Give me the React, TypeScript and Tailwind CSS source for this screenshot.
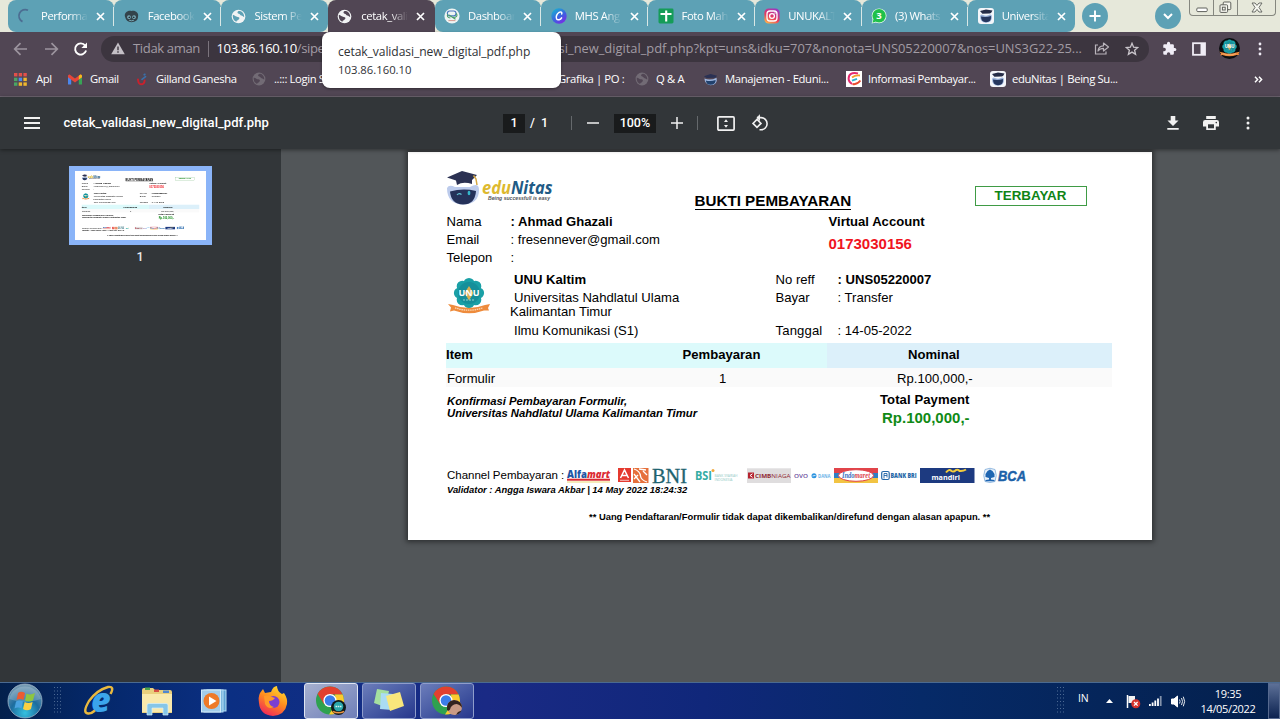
import type { ReactNode } from "react";

/* ---------- favicons and small icons ---------- */

const Globe = ({ fill = "#f1f3f4", bg = "#5da1b5", size = 15 }: { fill?: string; bg?: string; size?: number }) => (
  <svg width={size} height={size} viewBox="0 0 16 16">
    <circle cx="8" cy="8" r="7.3" fill={fill} />
    <path d="M2 6.2 C4 6.6 5 8.4 7.2 8.4 C9 8.6 9.6 9.6 8.4 11 C7.2 12.4 6 12 5.8 13.6 C3 12.8 1.6 9.6 2 6.2Z" fill={bg} />
    <path d="M8 2.2 C6.4 3 6.6 4.6 8.2 5 C9.6 5.2 9.6 6.6 11 7 C12.4 7.2 13 8.2 14 8.6 C14.4 5.8 12.4 2.6 9.4 2Z" fill={bg} />
  </svg>
);

const Spinner = () => (
  <svg width="16" height="16" viewBox="0 0 16 16" fill="none" stroke="#4c6d92" strokeWidth="1.8">
    <path d="M5.5 13.6 A6.2 6.2 0 0 1 11 2.2" />
  </svg>
);

const Face = () => (
  <svg width="15" height="15" viewBox="0 0 16 16">
    <path d="M1 8 C0 4 4 1 8 2 C12 1 16 4 15 8 C15 12 12 14 8 14 C4 14 2 12 1 8Z" fill="#33434b" />
    <circle cx="5.3" cy="8.6" r="2" fill="#7db0bf" />
    <circle cx="10.7" cy="8.6" r="2" fill="#7db0bf" />
    <circle cx="5.6" cy="8.8" r=".9" fill="#222c31" />
    <circle cx="10.4" cy="8.8" r=".9" fill="#222c31" />
    <path d="M5.5 12 Q8 13.2 10.5 12" stroke="#7db0bf" fill="none" />
  </svg>
);

const DashIcon = () => (
  <svg width="16" height="16" viewBox="0 0 16 16" fill="none">
    <circle cx="8" cy="8" r="7.6" fill="#eef4f3" />
    <rect x="3.4" y="3" width="8.6" height="4.8" rx="2.3" stroke="#4d79c0" strokeWidth="1.2" />
    <path d="M5 7 L11.5 11.2 M12 5.5 C14.4 7.4 12 9.8 8.6 9.2 M4 6 C2.4 8 4 10 6.4 10" stroke="#4a9e67" strokeWidth="1.1" />
    <path d="M4.4 12.6 H11.4" stroke="#d89a90" />
  </svg>
);

const CanvaIcon = () => (
  <svg width="16" height="16" viewBox="0 0 16 16" fill="none">
    <defs>
      <linearGradient id="canva" x1="0" y1="0" x2=".7" y2="1">
        <stop offset="0" stopColor="#12bfd0" />
        <stop offset=".6" stopColor="#3b63e0" />
        <stop offset="1" stopColor="#7a2ae8" />
      </linearGradient>
    </defs>
    <circle cx="8" cy="8" r="7.7" fill="url(#canva)" />
    <path d="M10.7 6 C11.5 4.2 9.8 3.4 8.1 4.3 C5.8 5.6 4.6 9 5.6 10.8 C6.6 12.6 9.6 11.6 10.6 9.8" stroke="#fff" strokeWidth="1.5" strokeLinecap="round" />
  </svg>
);

const SheetIcon = () => (
  <svg width="16" height="16" viewBox="0 0 16 16">
    <rect x=".5" y=".5" width="15" height="15" rx="1.4" fill="#159c58" />
    <path d="M8.2 2.5 V13.5 M2.5 6 H13.5" stroke="#fff" strokeWidth="2.1" />
  </svg>
);

const InstaIcon = () => (
  <svg width="16" height="16" viewBox="0 0 16 16" fill="none">
    <defs>
      <linearGradient id="insta" x1=".2" y1="1" x2=".7" y2="0">
        <stop offset="0" stopColor="#fdb44b" />
        <stop offset=".45" stopColor="#e8395e" />
        <stop offset="1" stopColor="#9b36c0" />
      </linearGradient>
    </defs>
    <rect x=".4" y=".4" width="15.2" height="15.2" rx="4.2" fill="url(#insta)" />
    <rect x="3" y="3" width="10" height="10" rx="3" stroke="#fff" strokeWidth="1.3" />
    <circle cx="8" cy="8" r="2.4" stroke="#fff" strokeWidth="1.3" />
    <circle cx="11" cy="5" r=".7" fill="#fff" />
  </svg>
);

const WhatsIcon = () => (
  <svg width="16" height="16" viewBox="0 0 16 16">
    <circle cx="8.1" cy="7.8" r="7.4" fill="#e9fbee" />
    <path d="M.6 15.6 L1.8 11 L5 14.4Z" fill="#e9fbee" />
    <circle cx="8.1" cy="7.8" r="6.7" fill="#1fc04a" />
    <path d="M1.5 14.7 L2.5 11 L5 13.6Z" fill="#1fc04a" />
    <text x="8" y="11.3" textAnchor="middle" fontFamily="Open Sans" fontWeight="700" fontSize="9.5" fill="#fff">3</text>
  </svg>
);

const EduIcon = () => (
  <svg width="16" height="16" viewBox="0 0 16 16">
    <rect width="16" height="16" rx="3" fill="#f4f6fa" />
    <path d="M2 3 L8 1.4 L14.5 2.6 L13 5 L11.5 5.6 L4.4 5.8Z" fill="#252c47" />
    <path d="M2 8 Q3 5.5 5 7 Q9 8.5 12 6.5 Q14 6 14 9 Q14 14.6 8 14.7 Q2 14.6 2 8Z" fill="#9db5dc" />
    <path d="M3 8.5 Q8 9.5 13 8 Q13.5 14.2 8 14.3 Q3 14 3 8.5Z" fill="#26375e" />
  </svg>
);

const ManajemenIcon = () => (
  <svg width="15" height="15" viewBox="0 0 16 16">
    <path d="M1 4.5 L8 2 L15 4 L13 6 L4 6.5Z" fill="#2a3154" />
    <path d="M1.5 7 Q8 9.5 14.5 6 Q16 13.6 8 14 Q2 13.6 1.5 7Z" fill="#9fb7e0" />
    <path d="M3 9 Q8 10.5 13.5 8.5 Q13.5 13.5 8 13.6 Q3.5 13.4 3 9Z" fill="#20406b" />
  </svg>
);

const AppsIcon = () => (
  <svg width="13" height="13" viewBox="0 0 13 13">
    {["#e2504a", "#e2504a", "#e2504a", "#4aa564", "#4d8be8", "#efb72e", "#4aa564", "#efb72e", "#efb72e"].map((c, i) => (
      <rect key={i} x={(i % 3) * 4.7} y={Math.floor(i / 3) * 4.7} width="3.4" height="3.4" fill={c} />
    ))}
  </svg>
);

const GmailIcon = () => (
  <svg width="14" height="11" viewBox="0 0 14 11">
    <path d="M0 1.5 V10 Q0 10.6 .6 10.6 H3.2 V4Z" fill="#4b86ec" />
    <path d="M14 1.5 V10 Q14 10.6 13.4 10.6 H10.8 V4Z" fill="#38a455" />
    <path d="M0 2 Q0 .3 1.6 .5 L7 4.6 L12.4 .5 Q14 .3 14 2 V3.2 L7 8.4 L0 3.2Z" fill="#e5463a" />
    <path d="M10.8 3.2 V1.7 L12.4 .5 Q14 .3 14 2 V3.2 L10.8 5.6Z" fill="#f6bb1d" />
  </svg>
);

const GillandIcon = () => (
  <svg width="12" height="13" viewBox="0 0 12 13" fill="none" strokeLinecap="round">
    <path d="M2 6.5 Q2.4 11.3 5 11.3 Q8.4 11.3 8.6 7.5" stroke="#c8212d" strokeWidth="2" />
    <path d="M6 6.3 L9.5 3.6 M8.2 1.8 L8.9 1.3" stroke="#3b6fa8" strokeWidth="1.7" />
  </svg>
);

const InfoIcon = () => (
  <svg width="16" height="16" viewBox="0 0 16 16" fill="none">
    <rect width="16" height="16" fill="#fff" />
    <path d="M12 2.5 Q2.6 .6 2.6 8 Q2.8 11 6 13" stroke="#e52b6f" strokeWidth="2" />
    <path d="M6 6.5 Q9 4 14 4.5" stroke="#f2a02c" strokeWidth="1.8" />
    <path d="M6.5 13 Q11 14 14.4 9.5" stroke="#e94a2f" strokeWidth="2" />
    <path d="M6 9.6 L11 7.8" stroke="#2bb1cf" strokeWidth="1.8" />
  </svg>
);

const CloseX = () => (
  <svg width="9" height="9" viewBox="0 0 9 9" className="shrink-0">
    <path d="M1 1 L8 8 M8 1 L1 8" stroke="#fff" strokeWidth="1.7" />
  </svg>
);

const Emblem = ({ size = 44, dark = false }: { size?: number; dark?: boolean }) => (
  <svg width={size} height={size} viewBox="0 0 44 44">
    {dark && <circle cx="22" cy="22" r="22" fill="#0b0e10" />}
    {[0, 45, 90, 135, 180, 225, 270, 315].map((a) => (
      <circle key={a} cx="22" cy="8.5" r="5.6" fill="#1aa0a6" transform={`rotate(${a} 22 18)`} />
    ))}
    <circle cx="22" cy="18" r="11" fill="#168f9a" />
    <path d="M22 11 L26.5 18 L22 25.500 L17.500 18Z" fill="#d9ae52" />
    <text x="22" y="21" textAnchor="middle" fontFamily="Open Sans" fontWeight="700" fontSize="9" fill="#fff">UNU</text>
    <path d="M16 25 H28" stroke="#8fd3cf" strokeWidth="1" strokeDasharray="2 1" />
    <path d="M1 29 L6 30 Q22 36 38 30 L43 29 L41 33 L42 35.500 L37 35.500 Q22 41 7 35.500 L3 36.500 L4 32.500Z" fill="#ee8b3c" />
    <path d="M8 32.800 Q22 37.600 36 32.800" stroke="#fbd9b5" strokeWidth="1.300" fill="none" strokeDasharray="1.500 .7" />
  </svg>
);

/* ---------- tab strip ---------- */

const Tab = ({ icon, label, active = false, sep = false, edge = "" }: { icon: ReactNode; label: string; active?: boolean; sep?: boolean; edge?: string }) => (
  <div className={`relative flex h-8 w-[106.75px] shrink-0 items-center pl-[9.500px] ${active ? "rounded-t-lg bg-[#514654]" : "rounded-t-lg bg-[#5da1b5]"} ${edge}`}>
    <div className="flex w-6 shrink-0 items-center">{icon}</div>
    <div className="w-[47px] shrink-0 overflow-hidden text-[11.300px] tracking-[-0.420px] whitespace-nowrap text-white [mask-image:linear-gradient(to_right,black_62%,transparent_100%)]">{label}</div>
    <div className="flex w-[25px] justify-center">
      <CloseX />
    </div>
    {sep && <div className="absolute top-[7px] right-0 h-[19px] w-px bg-[#d9e8e6]" />}
  </div>
);

const TabStrip = () => (
  <div className="flex h-8 bg-[#e6e8da] pl-[7.5px]">
    <Tab icon={<Spinner />} label="Performa" sep edge="rounded-bl-lg" />
    <Tab icon={<Face />} label="Facebook" sep />
    <Tab icon={<Globe />} label="Sistem Pe" edge="rounded-br-lg" />
    <Tab icon={<Globe bg="#514654" />} label="cetak_vali" active />
    <Tab icon={<DashIcon />} label="Dashboar" sep edge="rounded-bl-lg" />
    <Tab icon={<CanvaIcon />} label="MHS Ang" sep />
    <Tab icon={<SheetIcon />} label="Foto Mah" sep />
    <Tab icon={<InstaIcon />} label="UNUKALT" sep />
    <Tab icon={<WhatsIcon />} label="(3) Whats" sep />
    <Tab icon={<EduIcon />} label="Universita" edge="rounded-br-lg" />
    <div className="mt-[3px] ml-[7px] flex size-[26px] items-center justify-center rounded-full bg-[#5da1b5]">
      <svg width="12" height="12" viewBox="0 0 12 12"><path d="M6 .5 V11.5 M.5 6 H11.5" stroke="#fff" strokeWidth="1.9" /></svg>
    </div>
    <div className="mt-[3px] ml-[47px] flex size-[26px] items-center justify-center rounded-full bg-[#5da1b5]">
      <svg width="10" height="7" viewBox="0 0 10 7"><path d="M1 1 L5 5 L9 1" stroke="#fff" strokeWidth="2" fill="none" /></svg>
    </div>
    <div className="ml-[8px] flex h-[16px] w-[87px] rounded-b border border-t-0 border-[#85877f]">
      <div className="flex w-6 items-center justify-center border-r border-[#85877f]">
        <svg width="12" height="12" viewBox="0 0 12 12"><rect x=".8" y="6" width="10.4" height="3.6" rx="1" fill="#fff" stroke="#5e605b" /></svg>
      </div>
      <div className="flex w-6 items-center justify-center border-r border-[#85877f]">
        <svg width="13" height="13" viewBox="0 0 13 13" fill="#f6f7f0" stroke="#5e605b"><rect x="4.2" y="1" width="7.6" height="7.6" rx="1" /><rect x="1" y="3.8" width="7.6" height="7.6" rx="1" /><rect x="3.4" y="6.2" width="2.8" height="2.8" /></svg>
      </div>
      <div className="flex flex-1 items-center justify-center">
        <svg width="12" height="11" viewBox="0 0 12 11"><path d="M1 1 H4 L6 3.4 L8 1 H11 L8 5.4 L11 10 H8 L6 7.4 L4 10 H1 L4 5.4Z" fill="#f6f7f0" stroke="#5e605b" strokeWidth=".9" /></svg>
      </div>
    </div>
  </div>
);

/* ---------- address bar ---------- */

const AddressBar = () => (
  <div className="flex h-[33px] items-center bg-[#514654] pl-3 text-[13.1px] tracking-[-0.38px]">
    <svg width="17" height="16" viewBox="0 0 17 16" fill="none" stroke="#9c949e" strokeWidth="1.7"><path d="M15 8 H3 M8.5 2.2 L2.7 8 L8.5 13.8" /></svg>
    <svg className="ml-[14px]" width="17" height="16" viewBox="0 0 17 16" fill="none" stroke="#9c949e" strokeWidth="1.7"><path d="M2 8 H14 M8.5 2.2 L14.3 8 L8.5 13.8" /></svg>
    <svg className="ml-[12px]" width="17" height="16" viewBox="0 0 17 16" fill="none"><path d="M13.2 4.6 A5.6 5.6 0 1 0 14.1 9.6" stroke="#fff" strokeWidth="1.9" /><path d="M15 1.4 V7 H9.4Z" fill="#fff" /></svg>
    <div className="ml-[12px] flex h-[26px] w-[1048px] items-center rounded-full bg-[#3c353f] pl-[10px] text-[#a29ca4]">
      <svg width="14" height="13" viewBox="0 0 14 13"><path d="M7 .5 L13.8 12.2 H.2Z" fill="#c4c0c6" /><path d="M7 4.5 V8.2 M7 9.3 V10.8" stroke="#3c353f" strokeWidth="1.4" /></svg>
      <span className="ml-2 w-[75px] whitespace-nowrap">Tidak aman</span>
      <span className="h-4 w-px bg-[#7b747d]" />
      <span className="ml-[7.500px] w-[118.500px] overflow-hidden whitespace-nowrap"><span className="text-white">103.86.160.10</span>/sipema/</span>
      <span className="flex w-[747px] justify-end overflow-hidden text-[12.9px] tracking-[-0.010px] whitespace-nowrap">validasi_new_digital_pdf.php?kpt=uns&amp;idku=707&amp;nonota=UNS05220007&amp;nos=UNS3G22-25...</span>
      <svg className="ml-[12px]" width="16" height="15" viewBox="0 0 16 15" fill="none" stroke="#b9b4bb" strokeWidth="1.2"><path d="M4 4 H1.5 V13 H12 V10.5" /><path d="M4 10 Q4.5 5 9.5 4.8 V2 L14.5 6 L9.5 10 V7.3 Q6 7.3 4 10Z" strokeLinejoin="round" /></svg>
      <svg className="ml-[15px]" width="14" height="14" viewBox="0 0 14 14" fill="none" stroke="#c9c5cb" strokeWidth="1.3"><path d="M7 1.3 L8.6 5.2 L12.8 5.5 L9.6 8.2 L10.6 12.4 L7 10.1 L3.4 12.4 L4.4 8.2 L1.2 5.5 L5.4 5.2Z" /></svg>
    </div>
    <svg className="ml-[13px]" width="15" height="15" viewBox="0 0 24 24" fill="#f0edf6"><path d="M20.5 11H19V7a2 2 0 0 0-2-2h-4V3.500a2.500 2.500 0 0 0-5 0V5H4a2 2 0 0 0-2 2v3.800h1.500a2.700 2.700 0 0 1 0 5.400H2V20a2 2 0 0 0 2 2h3.800v-1.500a2.700 2.700 0 0 1 5.400 0V22H17a2 2 0 0 0 2-2v-4h1.500a2.500 2.500 0 0 0 0-5z" /></svg>
    <svg className="ml-[15px]" width="14" height="14" viewBox="0 0 14 14"><rect x="1" y="1.200" width="12" height="11.600" fill="none" stroke="#f0edf6" strokeWidth="1.800" /><rect x="8.500" y="1" width="4.500" height="12" fill="#f0edf6" /></svg>
    <span className="ml-[13px] flex"><Emblem size={21} dark /></span>
    <svg className="ml-[18px]" width="4" height="14" viewBox="0 0 4 14" fill="#f0edf6"><circle cx="2" cy="2" r="1.400" /><circle cx="2" cy="7" r="1.400" /><circle cx="2" cy="12" r="1.400" /></svg>
  </div>
);

const Bookmark = ({ icon, label, w, gap = "w-[22px]" }: { icon: ReactNode; label: string; w: string; gap?: string }) => (
  <div className={`flex shrink-0 items-center ${w}`}>
    <div className={`flex shrink-0 items-center ${gap}`}>{icon}</div>
    <span className="whitespace-nowrap">{label}</span>
  </div>
);

const Bookmarks = () => (
  <div className="flex h-8 items-center border-b border-[#6f6672] bg-[#514654] pb-[3px] pl-[14px] text-[11.3px] tracking-[-0.370px] text-white">
    <Bookmark icon={<AppsIcon />} label="Apl" w="w-[54px]" gap="w-[22px]" />
    <Bookmark icon={<GmailIcon />} label="Gmail" w="w-[68px]" />
    <Bookmark icon={<GillandIcon />} label="Gilland Ganesha" w="w-[116px]" gap="w-[20px]" />
    <Bookmark icon={<Globe fill="#726b75" bg="#514654" size={14} />} label="..::: Login S" w="w-[160px]" />
    <Bookmark icon={null} label="Grafika | PO :" w="w-[223px]" gap="w-[146px]" />
    <Bookmark icon={<Globe fill="#726b75" bg="#514654" size={14} />} label="Q & A" w="w-[68px]" gap="w-[21px]" />
    <Bookmark icon={<ManajemenIcon />} label="Manajemen - Eduni..." w="w-[143px]" />
    <Bookmark icon={<InfoIcon />} label="Informasi Pembayar..." w="w-[144px]" />
    <Bookmark icon={<EduIcon />} label="eduNitas | Being Su..." w="w-[263.500px]" />
    <svg width="9" height="7" viewBox="0 0 9 7" fill="none" stroke="#fff" strokeWidth="1.500"><path d="M1 .8 L3.600 3.500 L1 6.200 M5 .8 L7.600 3.500 L5 6.200" /></svg>
  </div>
);

/* ---------- PDF viewer ---------- */

const PdfToolbar = () => (
  <div className="relative z-10 flex h-[52px] items-center bg-[#323639] pl-6 font-['Roboto',sans-serif] text-[12.500px] font-medium text-white shadow-[0_1px_4px_rgba(0,0,0,0.45)]">
    <svg width="16" height="12" viewBox="0 0 16 12"><path d="M0 1 H16 M0 6 H16 M0 11 H16" stroke="#f1f1f1" strokeWidth="2" /></svg>
    <span className="ml-[23.500px] w-[439.500px] text-[13px] tracking-[0.040px]">cetak_validasi_new_digital_pdf.php</span>
    <span className="flex h-[19px] w-[22px] items-center justify-center bg-[#191b1c]">1</span>
    <span className="ml-[5px]">/</span>
    <span className="ml-[6px] w-[30px]">1</span>
    <span className="h-[14px] w-px bg-[#65696c]" />
    <svg className="ml-[15px]" width="12" height="12" viewBox="0 0 12 12"><path d="M0 6 H12" stroke="#f1f1f1" strokeWidth="1.500" /></svg>
    <span className="ml-[15px] flex h-[19px] w-[42px] items-center justify-center bg-[#191b1c]">100%</span>
    <svg className="ml-[15px]" width="12" height="12" viewBox="0 0 12 12"><path d="M0 6 H12 M6 0 V12" stroke="#f1f1f1" strokeWidth="1.500" /></svg>
    <span className="ml-[14px] h-[14px] w-px bg-[#65696c]" />
    <svg className="ml-[19px]" width="18" height="15" viewBox="0 0 18 15" fill="none"><rect x=".9" y=".9" width="16.200" height="13.200" rx="1" stroke="#f1f1f1" strokeWidth="1.700" /><path d="M9 3.300 L11 6 H7Z M9 11.700 L11 9 H7Z" fill="#f1f1f1" /></svg>
    <svg className="ml-[16px]" width="18" height="18" viewBox="0 0 18 18" fill="none" stroke="#f1f1f1" strokeWidth="1.600"><path d="M6 5.400 L10 9.400 L6 13.400 L2 9.400Z" /><path d="M6 3.600 H10 A6 6 0 0 1 10 15.800 L8.500 15.700" /><path d="M9 .6 L5.800 3.700 L9 6.800" fill="#f1f1f1" strokeWidth=".6" /></svg>
    <div className="ml-auto flex items-center pr-[30px]">
      <svg width="12" height="14" viewBox="0 0 12 14" fill="#f1f1f1"><path d="M3.700 0 H8.300 V4.500 H11.500 L6 10 L.5 4.500 H3.700Z M.3 12 H11.700 V13.700 H.3Z" /></svg>
      <svg className="ml-[24px]" width="16" height="14" viewBox="0 0 16 14"><path d="M3.200 0 H12.800 V3 H3.200Z M2.200 4 H13.800 Q16 4 16 6.300 V10.500 H12.800 V14 H3.200 V10.500 H0 V6.300 Q0 4 2.200 4Z" fill="#f1f1f1" /><path d="M5 8.300 H11 V12.300 H5Z" fill="#323639" /><circle cx="13.300" cy="6.600" r=".8" fill="#323639" /></svg>
      <svg className="ml-[27px]" width="4" height="14" viewBox="0 0 4 14" fill="#f1f1f1"><circle cx="2" cy="2" r="1.500" /><circle cx="2" cy="7" r="1.500" /><circle cx="2" cy="12" r="1.500" /></svg>
    </div>
  </div>
);

const EduLogo = () => (
  <svg width="110" height="38" viewBox="0 0 110 38" className="shrink-0">
    <path d="M1 18 Q3 14 9 17 H24 Q33 12 33 20 Q33 34 17 34.500 Q1 34 1 18Z" fill="#bccbec" />
    <path d="M4 21.500 Q17 18 30 21 Q29 34.500 17 34.500 Q5 34 4 21.500Z" fill="#25325a" />
    <path d="M1 7.500 L16 1 L31 5 L26 10 L26 14 Q17 11 11 15 L10 10.500Z" fill="#2b3152" />
    <path d="M27.500 5.500 L30 9 L31 15" stroke="#d4a743" strokeWidth="1.500" fill="none" />
    <path d="M11 25 Q13 22.500 15.500 24.500" stroke="#62c4d4" fill="none" strokeWidth="1.200" />
    <ellipse cx="23" cy="23" rx="1.400" ry="2.300" fill="#35b7cc" />
    <text x="36" y="24" fontFamily="Open Sans" fontWeight="700" fontStyle="italic" fontSize="17" textLength="70.500" lengthAdjust="spacingAndGlyphs"><tspan fill="#ddb92f">edu</tspan><tspan fill="#205a85">Nitas</tspan></text>
    <text x="42" y="30" fontFamily="Liberation Sans" fontWeight="700" fontStyle="italic" fontSize="5.500" fill="#55565a" textLength="62" lengthAdjust="spacingAndGlyphs">Being successfull is easy</text>
  </svg>
);

const Channels = () => (
  <svg width="462" height="18" viewBox="566 467 462 18" className="shrink-0" fontFamily="Open Sans">
    <text x="567" y="477.500" fontWeight="800" fontSize="10.500" textLength="43" lengthAdjust="spacingAndGlyphs"><tspan fill="#1d56a5">Alfa</tspan><tspan fill="#dc2b34" fontStyle="italic">mart</tspan></text>
    <rect x="567" y="478.700" width="43" height="2" fill="#d92931" />
    <path d="M567 482 H610" stroke="#e9cf55" strokeWidth=".8" />
    <rect x="618" y="468" width="13" height="14" fill="#e5392f" />
    <path d="M620.500 478 L624.500 470 L628.500 478 M622 475.500 H627" stroke="#fff" strokeWidth="1.500" fill="none" />
    <path d="M620 480.300 H629" stroke="#f6c4c0" />
    <rect x="633" y="468" width="15.500" height="15" fill="#e6703b" />
    <path d="M634 469 Q640 471 640.500 476 Q641 480 647 482 M634 479 L638 475 M643 471 L647 475 M634 474 L640 482 M639 469 L646 470" stroke="#fff" strokeWidth="1.300" fill="none" />
    <text x="652" y="483" fontFamily="Liberation Serif" fontSize="21" fill="#1e6370" stroke="#1e6370" strokeWidth=".3" textLength="35" lengthAdjust="spacingAndGlyphs">BNI</text>
    <text x="695" y="480.300" fontWeight="700" fontSize="11.500" fill="#35ada4" textLength="17" lengthAdjust="spacingAndGlyphs">BSI</text>
    <circle cx="713" cy="470.500" r="1.500" fill="#f0a83c" />
    <text x="714.500" y="477" fontSize="3" fill="#8fcac5" textLength="23" lengthAdjust="spacingAndGlyphs">BANK SYARIAH</text>
    <text x="714.500" y="480.800" fontSize="3" fill="#8fcac5" textLength="18" lengthAdjust="spacingAndGlyphs">INDONESIA</text>
    <rect x="747" y="468.300" width="44" height="14.700" fill="#dfddde" />
    <rect x="748" y="472.500" width="6" height="6" fill="#b5232f" />
    <path d="M752.500 473.800 L750 475.500 L752.500 477.300" stroke="#fff" fill="none" />
    <text x="755" y="477.800" fontWeight="700" fontSize="5.800" fill="#8f2a33" textLength="35.500" lengthAdjust="spacingAndGlyphs">CIMB<tspan fontWeight="400">NIAGA</tspan></text>
    <text x="794" y="478" fontWeight="600" fontSize="6" fill="#6a4a9c" textLength="14" lengthAdjust="spacingAndGlyphs">OVO</text>
    <circle cx="814" cy="475.700" r="2.500" fill="#2d94e0" />
    <path d="M812.500 476 L815.500 475.400" stroke="#fff" strokeWidth=".8" />
    <text x="818" y="477.500" fontWeight="700" fontSize="4.800" fill="#69b4e8" textLength="12.500" lengthAdjust="spacingAndGlyphs">DANA</text>
    <rect x="834" y="468" width="44" height="5" fill="#e1444a" />
    <rect x="834" y="473" width="44" height="5.500" fill="#2f7fc3" />
    <rect x="834" y="478" width="44" height="5" fill="#f2c443" />
    <ellipse cx="856" cy="475.500" rx="17.500" ry="5.800" fill="#fff" stroke="#e1444a" strokeWidth="1" />
    <text x="842" y="478" fontFamily="Liberation Serif" fontStyle="italic" fontWeight="700" fontSize="7.500" fill="#3b6fc0" textLength="28" lengthAdjust="spacingAndGlyphs">Indo<tspan fill="#dd4850">maret</tspan></text>
    <rect x="881.700" y="471.500" width="7.500" height="8" rx="1.500" fill="none" stroke="#2468a8" strokeWidth="1.200" />
    <path d="M884 478.500 V473.500 H887 V477.500 M884 475.500 H887" stroke="#2468a8" fill="none" strokeWidth=".9" />
    <text x="890.500" y="478" fontWeight="800" fontSize="6" fill="#2468a8" textLength="26" lengthAdjust="spacingAndGlyphs">BANK BRI</text>
    <rect x="920" y="468" width="54.500" height="15" fill="#1d3a80" />
    <text x="931.500" y="480" fontWeight="700" fontSize="7.800" fill="#fff" textLength="28.500" lengthAdjust="spacingAndGlyphs">mandiri</text>
    <path d="M946 472.500 Q949 468.500 951.500 471 Q953.500 472.500 956 470 Q958.500 469 959.500 471 Q963 471.500 966 469.500" stroke="#f3cb3c" strokeWidth="2" fill="none" />
    <path d="M985 469.500 Q990 467 995 469.500 Q997.500 475.500 995 481.500 Q990 483.500 985 481.500 Q982.500 475.500 985 469.500Z" fill="#e9f1fa" stroke="#80addb" strokeWidth=".8" />
    <path d="M990 469.500 L992.500 471 L994.500 474 L994.500 477 L991 478 V479.500 L994.500 480 V481.300 H985.500 V480 L989 479.500 V478 L985.500 477 L985.500 474 L987.500 471Z" fill="#1f66b2" />
    <text x="998" y="481" fontFamily="Liberation Sans" fontWeight="700" fontStyle="italic" fontSize="15" fill="#1c61a8" stroke="#1c61a8" strokeWidth=".5" textLength="28" lengthAdjust="spacingAndGlyphs">BCA</text>
  </svg>
);

const Receipt = () => (
  <div className="flex h-[388px] w-[744px] shrink-0 flex-col bg-white pl-[38px] font-['Liberation_Sans',Arial,sans-serif] text-[13.100px] text-black">
    <div className="flex h-[61px] pt-[18px]">
      <EduLogo />
      <div className="mt-[22px] ml-[138.500px] w-[280px] text-[15.200px] leading-[18px] font-bold whitespace-nowrap"><span className="border-b-[1.500px] border-black leading-none">BUKTI PEMBAYARAN</span></div>
      <div className="mt-[16px] flex h-[20px] w-[112px] items-center justify-center border border-[#3f9b45] text-[13.400px] font-bold text-[#0f8415]">TERBAYAR</div>
    </div>
    <div className="flex h-[58px] leading-[18px]">
      <div className="w-[64.500px] pl-[0.500px]">
        <div>Nama</div>
        <div>Email</div>
        <div>Telepon</div>
      </div>
      <div className="w-[318px]">
        <div className="font-bold">: Ahmad Ghazali</div>
        <div>: fresennever@gmail.com</div>
        <div>:</div>
      </div>
      <div className="font-bold">
        <div>Virtual Account</div>
        <div className="mt-[4px] text-[15px] text-[#f0141e]">0173030156</div>
      </div>
    </div>
    <div className="flex h-[72px] leading-[18px]">
      <div className="w-[64px] pt-[4px] pl-[1px]"><Emblem size={44} /></div>
      <div className="w-[265.500px]">
        <div className="pl-[4px] font-bold">UNU Kaltim</div>
        <div className="pt-[2px] pl-[4px] leading-[14px]">Universitas Nahdlatul Ulama</div>
        <div className="leading-[14px]">Kalimantan Timur</div>
        <div className="pt-[3px] pl-[4px]">Ilmu Komunikasi (S1)</div>
      </div>
      <div className="w-[62px]">
        <div>No reff</div>
        <div>Bayar</div>
        <div className="pt-[15px] tracking-[0.150px]">Tanggal</div>
      </div>
      <div>
        <div className="font-bold">: UNS05220007</div>
        <div>: Transfer</div>
        <div className="pt-[15px]">: 14-05-2022</div>
      </div>
    </div>
    <div className="flex h-[25px] w-[666px] items-center font-bold">
      <div className="flex h-full w-[381px] items-center bg-[#dcfafb] pb-[2px]">
        <span className="w-[236.500px]">Item</span>
        <span>Pembayaran</span>
      </div>
      <div className="flex h-full flex-1 items-center bg-[#dcf0fa] pb-[2px] pl-[81px]">Nominal</div>
    </div>
    <div className="flex h-[19px] w-[666px] items-center bg-[#fafafa] pt-[2px] pl-[1px]">
      <span className="w-[272px]">Formulir</span>
      <span className="w-[178px]">1</span>
      <span>Rp.100,000,-</span>
    </div>
    <div className="flex h-[80px] pt-[4px] pl-[1px] font-bold">
      <div className="w-[433px] pt-[4px] text-[11.300px] leading-[12px] tracking-[-0.020px] italic">
        <div>Konfirmasi Pembayaran Formulir,</div>
        <div>Universitas Nahdlatul Ulama Kalimantan Timur</div>
      </div>
      <div className="leading-[18px]">
        <div className="tracking-[0.080px]">Total Payment</div>
        <div className="pl-[2px] text-[15px] text-[#108a16]">Rp.100,000,-</div>
      </div>
    </div>
    <div className="flex h-[17px] items-center pl-[1px]">
      <span className="w-[119px] text-[11.500px] tracking-[-0.020px] whitespace-nowrap">Channel Pembayaran :</span>
      <Channels />
    </div>
    <div className="pl-[1px] text-[9.400px] leading-[12px] font-bold italic">Validator : Angga Iswara Akbar | 14 May 2022 18:24:32</div>
    <div className="pt-[15px] pl-[143px] text-[9.400px] leading-[12px] font-bold">** Uang Pendaftaran/Formulir tidak dapat dikembalikan/direfund dengan alasan apapun. **</div>
  </div>
);

const Viewer = () => (
  <div className="flex h-[533px]">
    <div className="w-[281px] bg-[#323639] pt-[16.500px] pl-[69px]">
      <div className="h-[79px] w-[143px] bg-[#8ab4f8] px-[6px] py-[5px]">
        <div className="h-[69px] w-[131px] overflow-hidden bg-white">
          <div className="origin-top-left scale-[0.1765]"><Receipt /></div>
        </div>
      </div>
      <div className="w-[142px] pt-[4px] text-center font-['Roboto',sans-serif] text-[12.500px] leading-4 font-medium text-[#e8eaed]">1</div>
    </div>
    <div className="flex-1 bg-[#525659] pt-[3px] pl-[127px]">
      <div className="h-[388px] w-[744px] shadow-[0_0_5px_2px_rgba(0,0,0,0.45)]"><Receipt /></div>
    </div>
  </div>
);

/* ---------- taskbar ---------- */

const Chrome = ({ children }: { children?: ReactNode }) => (
  <svg width="32" height="30" viewBox="0 0 32 30">
    <circle cx="15" cy="14.500" r="14" fill="#2fa14f" />
    <path d="M15 .5 A14 14 0 0 1 27.600 8.500 L15 8.500 L9 18 L2.600 8 A14 14 0 0 1 15 .5Z" fill="#e2402f" />
    <path d="M27.600 8.500 A14 14 0 0 1 14 28.500 L21 17.500 L20 8.500Z" fill="#fbcb2f" />
    <circle cx="15" cy="14.500" r="6.600" fill="#fff" />
    <circle cx="15" cy="14.500" r="5.300" fill="#3b7de9" />
    {children}
  </svg>
);

const Grip = () => (
  <svg width="9" height="28" viewBox="0 0 9 28" fill="#4d6a94">
    {Array.from({ length: 24 }, (_, i) => <rect key={i} x={(i % 3) * 3} y={Math.floor(i / 3) * 3.500} width="1" height="1" />)}
  </svg>
);

const taskButton = "flex h-[36px] w-[54px] items-center justify-center rounded-[3px] border";

const Taskbar = () => (
  <div className="flex h-[37px] items-center border-t border-[#4b6a90] bg-[linear-gradient(to_right,#03204c_0%,#05286b_8%,#0b2f83_18%,#1a2a85_38%,#10277a_55%,#062a68_72%,#04204c_100%)] font-['Open_Sans',sans-serif] text-white">
    <svg className="ml-[7px]" width="36" height="36" viewBox="0 0 36 36">
      <defs>
        <radialGradient id="orb" cx=".5" cy=".85" r=".85">
          <stop offset="0" stopColor="#35c1e0" />
          <stop offset=".5" stopColor="#1d6c9e" />
          <stop offset="1" stopColor="#7f9fb5" />
        </radialGradient>
      </defs>
      <circle cx="18" cy="18" r="17" fill="url(#orb)" stroke="#9db4c6" strokeWidth=".8" />
      <path d="M2 16 A16.500 16.500 0 0 1 34 16 Q18 22 2 16Z" fill="#fff" opacity=".2" />
      <path d="M11 10 Q14 7.500 18 10 L16.500 17 Q13 15 9.500 17Z" fill="#ea5b32" />
      <path d="M19.500 10.500 Q23 12.500 28 10 L26 17.500 Q22 19.500 18 17.500Z" fill="#8dc641" />
      <path d="M9 18.500 Q12.500 16.500 16 18.500 L14.500 25.500 Q11 23.500 7.500 25.500Z" fill="#4aa3e0" />
      <path d="M17.700 19 Q21 21 25.600 19 L24 26 Q20 28.500 16 26Z" fill="#fbd043" />
    </svg>
    <span className="ml-[11px]"><Grip /></span>
    <svg className="ml-[20px]" width="32" height="32" viewBox="0 0 32 32" fill="none">
      <text x="8" y="27" fontFamily="Open Sans" fontWeight="800" fontStyle="italic" fontSize="34" fill="#3ba5ec">e</text>
      <path d="M27.500 9 Q32 1 25 2 Q14 5 6 16 Q-1 28 5 28.500 Q8 29 12 25.500" stroke="#e9b93f" strokeWidth="2.400" />
    </svg>
    <svg className="ml-[26px]" width="32" height="30" viewBox="0 0 32 30">
      <path d="M1 4 Q1 2 3 2 H12 L14 4 H29 Q31 4 31 6 V27 H1Z" fill="#e9cf7d" />
      <rect x="4" y="1.500" width="5" height="2.500" fill="#4da34b" />
      <rect x="13" y="3.500" width="5" height="2.500" fill="#d65044" />
      <rect x="22" y="4.500" width="6" height="2.500" fill="#5187cf" />
      <path d="M1 8 H31 V26 H1Z" fill="#f9e9ac" />
      <path d="M6 19 Q6 17.500 8 17.500 H25 Q27 17.500 27 19 V29 H22 V22 H11 V29 H6Z" fill="#86c6e8" stroke="#d5effa" strokeWidth=".7" />
    </svg>
    <svg className="ml-[28px]" width="27" height="26" viewBox="0 0 27 26">
      <rect x="6" y="2" width="19" height="21" fill="#5fa3d4" stroke="#b4dcf3" />
      <rect x="3" y="2" width="19" height="22" fill="#7cb7df" stroke="#b4dcf3" />
      <rect x=".5" y="2" width="19" height="22" fill="#a3cdea" stroke="#d3ebf8" />
      <circle cx="10.500" cy="13" r="8" fill="#ee7a28" />
      <path d="M8 8.500 L15.500 13 L8 17.500Z" fill="#fff" />
    </svg>
    <svg className="ml-[29px]" width="32" height="32" viewBox="0 0 32 32">
      <defs>
        <linearGradient id="fox" x1=".8" y1="0" x2=".3" y2="1">
          <stop offset="0" stopColor="#ffe02e" />
          <stop offset=".5" stopColor="#ff8a1f" />
          <stop offset="1" stopColor="#f0285a" />
        </linearGradient>
      </defs>
      <path d="M3 8 L6 4 L8 8 L14 7 Q16 1 20 1 Q20 6 25 9 L27 8 Q31 14 30 19 Q28 30 16 31 Q3 30 2 18 Q1 12 3 8Z" fill="url(#fox)" />
      <circle cx="16.500" cy="17" r="6" fill="#7b3fd2" />
      <path d="M7 11 Q11 9 15 12 L18 13 Q16 16 12 16 Q12 21 17 22 Q11 25 8 19Z" fill="#ff9a28" />
    </svg>
    <div className={`${taskButton} ml-[14.500px] border-[#dfe5f2] bg-linear-to-br from-[#a6b0cf] to-[#6f7fb8]`}>
      <Chrome><circle cx="23.500" cy="21.500" r="7.500" fill="#10181b" /><circle cx="23.500" cy="20.500" r="4.800" fill="#2aa6ac" /><path d="M20.500 20.500 H26.500" stroke="#d5f0ee" strokeWidth="1.500" strokeDasharray="1.600 .6" /><path d="M18 25.500 Q23.500 28 29 25.500" stroke="#eb9442" fill="none" strokeWidth="1.500" /></Chrome>
    </div>
    <div className={`${taskButton} ml-[4px] border-[#8f9dcb] bg-linear-to-br from-[#6c7dba] to-[#27378d]`}>
      <svg width="32" height="28" viewBox="0 0 32 28"><path d="M4 2 L16 4 L12 20 L1 16Z" fill="#a5dfa0" /><path d="M8 6 L20 7 L19 23 L7 22Z" fill="#aadcf3" /><path d="M13 9 L27 5 L31 19 L17 24Z" fill="#f9e77c" /></svg>
    </div>
    <div className={`${taskButton} ml-[4px] border-[#8f9dcb] bg-linear-to-br from-[#6c7dba] to-[#27378d]`}>
      <Chrome><circle cx="23.500" cy="21.500" r="7.500" fill="#c99a85" /><path d="M16 24 Q15 15 23 14 Q31 14.500 31 22 Q29 18.500 25.500 18 Q20 18.500 19 23.500 Q18 25.500 16 24Z" fill="#33231f" /><path d="M25 28.800 Q29 28 30.500 24.500 L27 26Z" fill="#2c2325" /></Chrome>
    </div>
    <div className="ml-auto flex h-full items-center">
      <Grip />
      <span className="ml-[12px] w-[28px] pb-[4px] text-[10.500px] tracking-[-0.300px]">IN</span>
      <svg width="7" height="4" viewBox="0 0 7 4"><path d="M3.500 0 L7 4 H0Z" fill="#fff" /></svg>
      <svg className="ml-[13px]" width="15" height="15" viewBox="0 0 15 15"><path d="M1.500 1 V14" stroke="#fff" strokeWidth="1.500" /><path d="M2.500 2 H9 V9 H2.500Z" fill="#f3f3f3" /><circle cx="9.800" cy="9.800" r="4.500" fill="#d6332d" /><path d="M8 8 L11.600 11.600 M11.600 8 L8 11.600" stroke="#fff" strokeWidth="1.300" /></svg>
      <svg className="ml-[8px]" width="13" height="12" viewBox="0 0 13 12" fill="#fff"><path d="M0 9 H1.800 V11 H0Z M2.700 7.500 H4.500 V11 H2.700Z M5.400 5.500 H7.200 V11 H5.400Z M8.100 3.500 H9.900 V11 H8.100Z" /><path d="M10.800 1 H12.600 V11 H10.800Z" opacity=".5" /></svg>
      <svg className="ml-[9px]" width="15" height="13" viewBox="0 0 15 13" fill="none" stroke="#fff"><path d="M.5 4 H3 L6.500 1 V12 L3 9 H.5Z" fill="#fff" /><path d="M8.500 4.500 Q9.700 6.500 8.500 8.500 M10.500 3 Q12.600 6.500 10.500 10 M12.300 1.700 Q15 6.500 12.300 11.300" strokeWidth=".9" /></svg>
      <div className="ml-[10px] w-[64px] text-center text-[11px] leading-[15.500px] tracking-[-0.350px]">
        <div>19:35</div>
        <div>14/05/2022</div>
      </div>
      <div className="ml-[8px] h-[36px] w-[12px] border border-[#56698f] bg-linear-to-b from-[#5d7097] to-[#0c2250]" />
    </div>
  </div>
);

export default function App() {
  return (
    <div className="relative flex h-[719px] w-[1280px] flex-col overflow-hidden bg-[#525659] font-['Open_Sans',sans-serif]">
      <TabStrip />
      <AddressBar />
      <Bookmarks />
      <PdfToolbar />
      <Viewer />
      <Taskbar />
      <div className="absolute top-8 left-[322px] z-20 h-14 w-[239px] rounded-lg bg-white pt-[10.500px] pl-4 text-[12.100px] leading-[17px] tracking-[-0.080px] text-[#303236] shadow-[0_1px_3px_rgba(0,0,0,0.4)]">
        <div className="font-medium whitespace-nowrap">cetak_validasi_new_digital_pdf.php</div>
        <div className="pt-[1px] text-[11.300px] tracking-[0px]">103.86.160.10</div>
      </div>
    </div>
  );
}
